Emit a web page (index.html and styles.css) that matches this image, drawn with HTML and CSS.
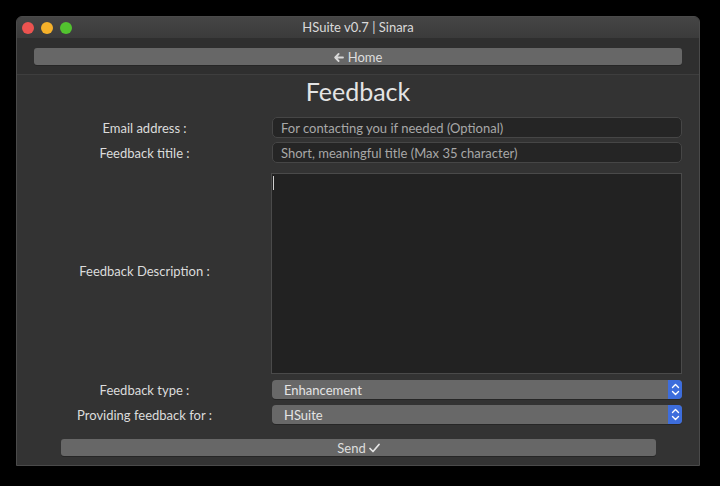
FILE: index.html
```html
<!DOCTYPE html>
<html>
<head>
<meta charset="utf-8">
<link rel="stylesheet" href="styles.css">
</head>
<body>
<div class="window">
  <div class="titlebar">
    <div class="lights">
      <span class="light red"></span>
      <span class="light yellow"></span>
      <span class="light green"></span>
    </div>
    <div class="wtitle">HSuite v0.7 | Sinara</div>
  </div>
  <div class="toolbar">
    <div class="btn home">
      <svg class="arrow" width="10" height="9" viewBox="0 0 10 9"><path d="M9 4.5H2M4.6 1L1.2 4.5L4.6 8" fill="none" stroke="#d8d8d8" stroke-width="1.8" stroke-linecap="round" stroke-linejoin="round"/></svg>
      <span>Home</span>
    </div>
  </div>
  <div class="content">
    <h1 class="heading">Feedback</h1>
    <div class="form">
      <div class="label">Email address :</div>
      <div class="input"><span class="ph">For contacting you if needed (Optional)</span></div>
      <div class="label">Feedback titile :</div>
      <div class="input"><span class="ph">Short, meaningful title (Max 35 character)</span></div>
      <div class="label">Feedback Description :</div>
      <div class="textarea"><span class="caret"></span></div>
      <div class="label sel-label">Feedback type :</div>
      <div class="select"><span class="val">Enhancement</span><span class="stepper"><svg width="9" height="13" viewBox="0 0 9 13"><path d="M1.5 4.5L4.5 1.5L7.5 4.5M1.5 8.5L4.5 11.5L7.5 8.5" fill="none" stroke="#fff" stroke-width="1.4" stroke-linecap="round" stroke-linejoin="round"/></svg></span></div>
      <div class="label sel-label">Providing feedback for :</div>
      <div class="select"><span class="val">HSuite</span><span class="stepper"><svg width="9" height="13" viewBox="0 0 9 13"><path d="M1.5 4.5L4.5 1.5L7.5 4.5M1.5 8.5L4.5 11.5L7.5 8.5" fill="none" stroke="#fff" stroke-width="1.4" stroke-linecap="round" stroke-linejoin="round"/></svg></span></div>
    </div>
    <div class="btn send">
      <span>Send</span>
      <svg width="11" height="10" viewBox="0 0 11 10"><path d="M1 5.5L4 8.5L10 1.5" fill="none" stroke="#e6e6e6" stroke-width="1.7" stroke-linecap="round" stroke-linejoin="round"/></svg>
    </div>
  </div>
</div>
</body>
</html>
```
FILE: styles.css
```css
* { box-sizing: border-box; }
html, body {
  margin: 0;
  padding: 0;
  background: #000;
  width: 720px;
  height: 486px;
  overflow: hidden;
  font-family: "Lato", "Noto Sans", sans-serif;
  font-size: 13px;
  color: #dcdcdc;
}
.window {
  margin: 16px 0 0 16px;
  width: 684px;
  height: 450px;
  border: 1px solid #4a4a4a;
  border-radius: 6px 6px 0 0;
  background: #333333;
  display: flex;
  flex-direction: column;
  overflow: hidden;
}
.titlebar {
  height: 21px;
  flex: none;
  background: linear-gradient(#454545, #3b3b3b);
  display: flex;
  align-items: center;
  position: relative;
}
.lights {
  display: flex;
  gap: 7px;
  padding-left: 5px;
}
.light {
  width: 12px;
  height: 12px;
  border-radius: 50%;
  display: block;
}
.red { background: #ec5350; }
.yellow { background: #f5b12a; }
.green { background: #52c32f; }
.wtitle {
  position: absolute;
  left: 0;
  right: 0;
  text-align: center;
  top: 2px;
  font-size: 13px;
  color: #dadada;
}
.toolbar {
  height: 37px;
  flex: none;
  background: #2f2f2f;
  padding: 10px 17px 0 17px;
  border-bottom: 1px solid #3e3e3e;
}
.btn {
  background: #676767;
  border-radius: 3px;
  display: flex;
  align-items: center;
  justify-content: center;
  gap: 4px;
  color: #dedede;
  font-size: 13px;
  box-shadow: 0 1px 0 #262626;
}
.home {
  height: 17px;
}
.arrow { margin-top: 1px; }
.content {
  flex: 1;
  display: flex;
  flex-direction: column;
  background: #333333;
}
.heading {
  margin: 1px 0 0 0;
  font-weight: normal;
  font-size: 25px;
  line-height: 30px;
  text-align: center;
  color: #e4e4e4;
}
.form {
  margin-top: 11px;
  display: grid;
  grid-template-columns: 255px 410px;
  row-gap: 4px;
  align-items: center;
}
.label {
  text-align: center;
  color: #dcdcdc;
}
.input {
  height: 21px;
  background: #252525;
  border: 1px solid #464646;
  border-radius: 5px;
  padding: 0 8px;
  display: flex;
  align-items: center;
}
.ph { color: #a8a8a8; }
.textarea {
  margin-top: 6px;
  height: 201px;
  margin-left: -1px;
  width: 411px;
  background: #222222;
  border: 1px solid #4a4a4a;
  position: relative;
}
.caret {
  position: absolute;
  left: 1px;
  top: 2px;
  width: 1px;
  height: 14px;
  background: #d0d0d0;
}
.sel-label { margin-top: 2px; }
.select {
  margin-top: 2px;
  height: 19px;
  background: #686868;
  border-radius: 4px;
  display: flex;
  align-items: center;
  justify-content: space-between;
  overflow: hidden;
  box-shadow: 0 1px 0 #262626;
}
.val {
  padding-left: 12px;
  color: #e4e4e4;
}
.stepper {
  width: 14px;
  height: 19px;
  background: #3d6ddc;
  display: flex;
  align-items: center;
  justify-content: center;
}
.send {
  margin: 15px 0 0 44px;
  width: 595px;
  height: 17px;
  gap: 3px;
}
```
